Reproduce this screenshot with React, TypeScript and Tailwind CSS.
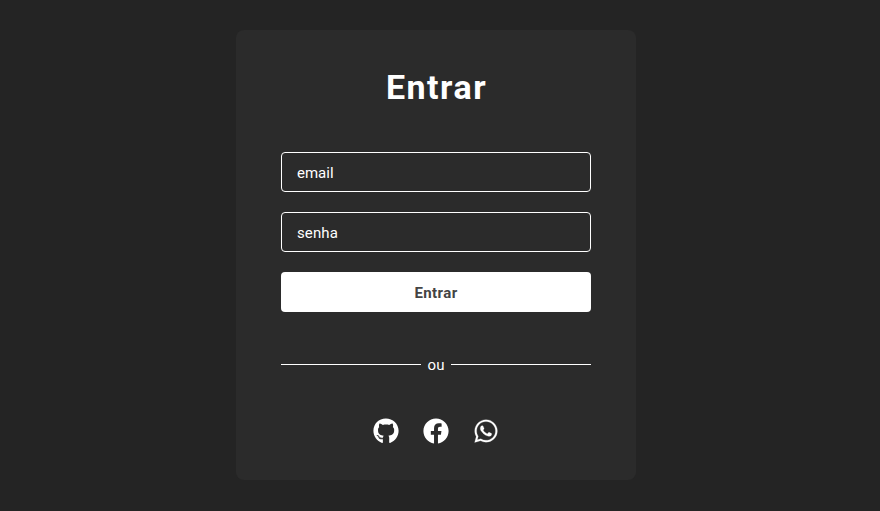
import { FaGithub, FaFacebook, FaWhatsapp } from "react-icons/fa";

const fieldClass =
  "h-10 rounded border border-white px-[15px] pt-0.5 text-[15px] text-white outline-none placeholder:text-white";

export default function App() {
  return (
    <div className="flex h-[511px] w-full justify-center bg-[#242424] pt-[30px] pr-2 font-[Roboto,sans-serif] text-white">
      <main className="flex h-[450px] w-[400px] flex-col items-center rounded-lg bg-[#2b2b2b] px-[45px]">
        <h1 className="mt-[30px] h-[54px] pl-px text-[34px] leading-[54px] font-bold tracking-[1.5px]">Entrar</h1>
        <form className="mt-[38px] flex w-full flex-col gap-5" onSubmit={(e) => e.preventDefault()}>
          <input type="email" placeholder="email" className={fieldClass} />
          <input type="password" placeholder="senha" className={`${fieldClass} tracking-[0.1px]`} />
          <button className="h-10 rounded bg-white pt-0.5 text-[15px] font-bold tracking-[0.4px] text-[#444]">Entrar</button>
        </form>
        <div className="mt-10 flex h-6 w-full items-center">
          <span className="h-px w-[140px] bg-white" />
          <span className="flex-1 pt-0.5 text-center text-[15px]">ou</span>
          <span className="h-px w-[140px] bg-white" />
        </div>
        <div className="mt-[41.5px] flex gap-6 text-[26px]">
          <FaGithub />
          <FaFacebook />
          <FaWhatsapp className="stroke-white stroke-[4px]" />
        </div>
      </main>
    </div>
  );
}
